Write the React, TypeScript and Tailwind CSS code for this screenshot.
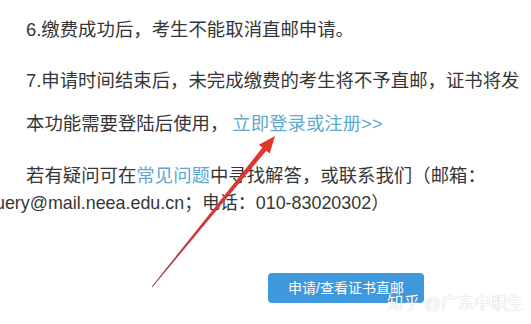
import React from "react";

export default function App() {
  const font = { fontFamily: '"Liberation Sans", "Noto Sans CJK SC", sans-serif' };
  return (
    <div className="relative w-[531px] h-[324px] overflow-hidden bg-white" style={font}>
      <div className="ml-[-9px] w-[540px] text-[18.4px] leading-[27px] text-[#363636] whitespace-nowrap">
        <p className="pt-[16px] indent-[35px]">6.缴费成功后，考生不能取消直邮申请。</p>
        <p className="mt-[24px] indent-[35px]">7.申请时间结束后，未完成缴费的考生将不予直邮，证书将发</p>
        <p className="mt-[16px] indent-[35px]">
          本功能需要登陆后使用，<span className="ml-[4px] text-[#5fa8cf]">立即登录或注册&gt;&gt;</span>
        </p>
        <p className="mt-[25px] indent-[35px]">
          若有疑问可在<span className="text-[#5fa8cf]">常见问题</span>中寻找解答，或联系我们（邮箱：
          <br />
          <span className="inline-block indent-0 ml-[-6px] text-[17.9px]">query@mail.neea.edu.cn；电话：010-83020302）</span>
        </p>
      </div>
      <div className="ml-[268px] mt-[56px] flex h-[30px] w-[156px] items-center justify-center rounded-[4px] bg-[#3f98db] text-[14px] text-white">
        申请/查看证书直邮
      </div>
      <div
        className="absolute left-[387px] top-[292px] text-[16.5px] leading-[22px] text-white"
        style={{ textShadow: "0 0 1px rgba(0,0,0,0.3)" }}
      >
        知乎 @广东中职生
      </div>
      <svg className="absolute left-0 top-0" width="531" height="324" viewBox="0 0 531 324">
        <defs>
          <linearGradient id="ag" x1="152" y1="287" x2="275" y2="136" gradientUnits="userSpaceOnUse">
            <stop offset="0" stopColor="#8a4a55" />
            <stop offset="0.3" stopColor="#c8383a" />
            <stop offset="1" stopColor="#e8352b" />
          </linearGradient>
        </defs>
        <polygon
          points="152.4,287.3 266.2,150.8 269.7,153.6 275,136 258.9,144.8 262.4,147.6 151.6,286.7"
          fill="url(#ag)"
        />
      </svg>
    </div>
  );
}
